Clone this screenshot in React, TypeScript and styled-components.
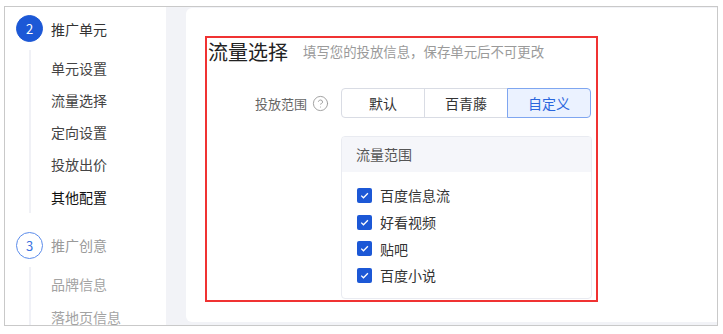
import React from "react";
import styled, { createGlobalStyle } from "styled-components";
import { CircleHelp } from "lucide-react";

const GlobalStyle = createGlobalStyle`
  * {
    box-sizing: border-box;
  }
  body {
    margin: 0;
    background: #ffffff;
    font-family: "Noto Sans CJK SC", "Noto Sans", sans-serif;
    color: #333333;
  }
`;

const Frame = styled.div`
  display: flex;
  width: 714px;
  height: 320px;
  margin: 6px 0 0 4px;
  border: 1px solid #c9c9c9;
  overflow: hidden;
`;

const Sidebar = styled.div`
  width: 161px;
  flex-shrink: 0;
  background: #ffffff;
  display: flex;
  flex-direction: column;
  padding-top: 0;
  overflow: hidden;
`;

const StepHeader = styled.div<{ $gap?: number }>`
  display: flex;
  align-items: center;
  flex-shrink: 0;
  height: 43px;
  padding-left: 11px;
  margin-top: ${({ $gap }) => $gap ?? 0}px;
`;

const StepCircle = styled.div<{ $active?: boolean }>`
  width: 27px;
  height: 27px;
  border-radius: 50%;
  display: flex;
  align-items: center;
  justify-content: center;
  font-size: 13px;
  background: ${({ $active }) => ($active ? "#1c58d6" : "#ffffff")};
  color: ${({ $active }) => ($active ? "#ffffff" : "#3a72e0")};
  border: 1px solid ${({ $active }) => ($active ? "#1c58d6" : "#5b8ceb")};
`;

const StepTitle = styled.span<{ $active?: boolean }>`
  margin-left: 8px;
  font-size: 14px;
  color: ${({ $active }) => ($active ? "#333333" : "#9a9a9a")};
`;

const SubList = styled.div`
  flex-shrink: 0;
  margin-left: 24px;
  padding-top: 1.5px;
  padding-left: 20px;
  border-left: 2px solid #f0f1f6;
`;

const SubItem = styled.div<{ $tone: "normal" | "strong" | "muted" }>`
  height: 32.25px;
  line-height: 32.25px;
  font-size: 14px;
  color: ${({ $tone }) =>
    $tone === "strong" ? "#111111" : $tone === "muted" ? "#a3a3a3" : "#444444"};
`;

const Main = styled.div`
  flex: 1;
  display: flex;
  background: #f2f3f7;
  padding: 1px 0 3px 20px;
`;

const Card = styled.div`
  flex: 1;
  background: #ffffff;
  border-radius: 6px 0 0 6px;
  padding: 28px 0 0 19px;
`;

const Highlight = styled.div`
  width: 393px;
  height: 266px;
  border: 2px solid #f03232;
  padding-top: 1px;
  display: flex;
  flex-direction: column;
`;

const TitleRow = styled.div`
  display: flex;
  align-items: center;
  height: 24px;
  padding-left: 1px;
`;

const Title = styled.h2`
  margin: 0;
  font-size: 20px;
  font-weight: 400;
  color: #222222;
`;

const Subtitle = styled.span`
  margin-left: 15px;
  font-size: 13.4px;
  color: #9a9a9a;
`;

const FormRow = styled.div`
  display: flex;
  align-items: center;
  margin-top: 25px;
`;

const Label = styled.div`
  width: 134px;
  display: flex;
  align-items: center;
  justify-content: flex-end;
  gap: 5px;
  padding-right: 12px;
  font-size: 13px;
  color: #666666;
`;

const Segmented = styled.div`
  display: flex;
`;

const SegButton = styled.button<{ $selected?: boolean; $pos: "first" | "mid" | "last" }>`
  width: 84px;
  height: 30px;
  font-family: inherit;
  font-size: 14px;
  background: ${({ $selected }) => ($selected ? "#ebf2ff" : "#ffffff")};
  color: ${({ $selected }) => ($selected ? "#2a66dd" : "#333333")};
  border: 1px solid ${({ $selected }) => ($selected ? "#7fa6f0" : "#d9dce4")};
  margin-left: ${({ $pos }) => ($pos === "first" ? 0 : -1)}px;
  border-radius: ${({ $pos }) =>
    $pos === "first" ? "4px 0 0 4px" : $pos === "last" ? "0 4px 4px 0" : "0"};
  position: relative;
  z-index: ${({ $selected }) => ($selected ? 1 : 0)};
  padding: 0;
`;

const Panel = styled.div`
  margin: 18px 0 0 134px;
  width: 251px;
  height: 163px;
  border: 1px solid #e9ebf1;
  border-radius: 4px;
  overflow: hidden;
`;

const PanelHeader = styled.div`
  height: 35px;
  line-height: 34px;
  padding-left: 14px;
  background: #f5f6fa;
  font-size: 14px;
  color: #555555;
`;

const PanelBody = styled.div`
  padding: 10px 0 0 15px;
`;

const CheckRow = styled.label`
  display: flex;
  align-items: center;
  gap: 8px;
  height: 26.7px;
  font-size: 14px;
  color: #333333;
`;

const CheckBox = styled.span`
  width: 15px;
  height: 15px;
  border-radius: 2px;
  background: #1c58d6;
  display: flex;
  align-items: center;
  justify-content: center;
`;

const steps2 = ["单元设置", "流量选择", "定向设置", "投放出价", "其他配置"];
const steps3 = ["品牌信息", "落地页信息"];
const channels = ["百度信息流", "好看视频", "贴吧", "百度小说"];

const Check = () => (
  <CheckBox>
    <svg width="11" height="11" viewBox="0 0 11 11">
      <path d="M2.2 5.6 L4.5 7.8 L8.9 3.3" fill="none" stroke="#ffffff" strokeWidth="1.3" />
    </svg>
  </CheckBox>
);

export default function App() {
  return (
    <>
      <GlobalStyle />
      <Frame>
        <Sidebar>
          <StepHeader>
            <StepCircle $active>2</StepCircle>
            <StepTitle $active>推广单元</StepTitle>
          </StepHeader>
          <SubList>
            {steps2.map((s, i) => (
              <SubItem key={s} $tone={i === steps2.length - 1 ? "strong" : "normal"}>
                {s}
              </SubItem>
            ))}
          </SubList>
          <StepHeader $gap={11}>
            <StepCircle>3</StepCircle>
            <StepTitle>推广创意</StepTitle>
          </StepHeader>
          <SubList>
            {steps3.map((s) => (
              <SubItem key={s} $tone="muted">
                {s}
              </SubItem>
            ))}
          </SubList>
        </Sidebar>
        <Main>
          <Card>
            <Highlight>
              <TitleRow>
                <Title>流量选择</Title>
                <Subtitle>填写您的投放信息，保存单元后不可更改</Subtitle>
              </TitleRow>
              <FormRow>
                <Label>
                  投放范围
                  <CircleHelp size={17} strokeWidth={1.3} color="#9a9a9a" />
                </Label>
                <Segmented>
                  <SegButton $pos="first">默认</SegButton>
                  <SegButton $pos="mid">百青藤</SegButton>
                  <SegButton $pos="last" $selected>
                    自定义
                  </SegButton>
                </Segmented>
              </FormRow>
              <Panel>
                <PanelHeader>流量范围</PanelHeader>
                <PanelBody>
                  {channels.map((c) => (
                    <CheckRow key={c}>
                      <Check />
                      {c}
                    </CheckRow>
                  ))}
                </PanelBody>
              </Panel>
            </Highlight>
          </Card>
        </Main>
      </Frame>
    </>
  );
}
